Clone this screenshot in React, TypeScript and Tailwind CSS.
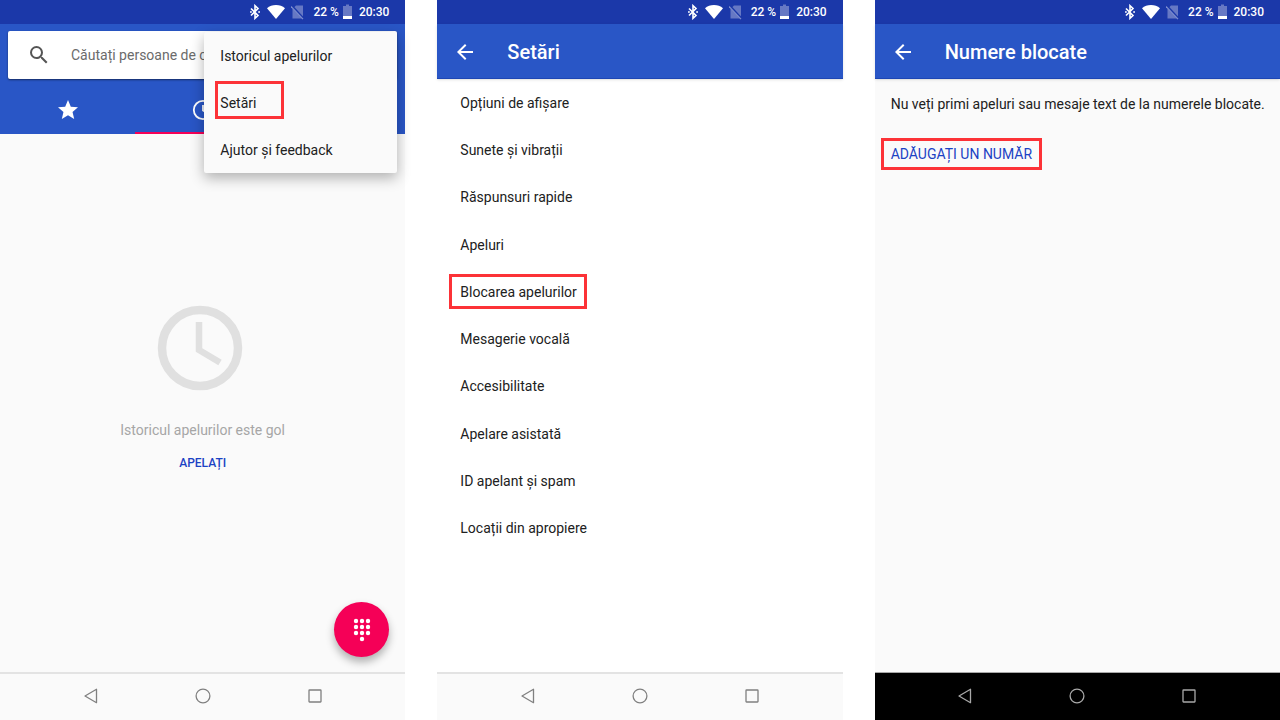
/**
 * App.tsx — Three phone screens side by side: call history with its overflow
 * menu open, the settings list, and the blocked numbers page.
 *
 * The red frames mark what to tap on each screen, in order.
 */

import React from "react";

const SETTINGS = [
  "Opțiuni de afișare",
  "Sunete și vibrații",
  "Răspunsuri rapide",
  "Apeluri",
  "Blocarea apelurilor",
  "Mesagerie vocală",
  "Accesibilitate",
  "Apelare asistată",
  "ID apelant și spam",
  "Locații din apropiere",
];

const MENU_ITEMS = ["Istoricul apelurilor", "Setări", "Ajutor și feedback"];

// Dots of the dialpad icon, three full rows and one below
const DIALPAD_DOTS = [
  [3, 3], [9, 3], [15, 3],
  [3, 9], [9, 9], [15, 9],
  [3, 15], [9, 15], [15, 15],
  [9, 21],
];

const StatusBar: React.FC = () => (
  <div className="flex h-6 items-center justify-end bg-[#1b38a9] pr-4 text-xs font-medium text-white">
    <svg className="mr-[7px] h-4 w-[10px]" viewBox="0 0 10 16" fill="none" stroke="currentColor" strokeWidth="1.6" aria-hidden="true">
      <path d="M1 4.500l7 7L5 14.300V1.700l3 2.800-7 7" />
      <path d="M0 8h1.800M8.200 8H10" />
    </svg>
    <svg className="mr-[6px] h-4 w-[18px]" viewBox="0 0 18 16" fill="currentColor" aria-hidden="true">
      <path d="M9 15L0 4.200C2.400 2.100 5.500 1 9 1s6.600 1.100 9 3.200z" />
    </svg>
    <svg className="mr-[9px] h-4 w-[13px]" viewBox="0 0 13 16" aria-hidden="true">
      <path d="M5 1.500h7v13H1.500V5z" fill="#6678c4" />
      <path d="M1 2l12 13" stroke="#1b38a9" strokeWidth="2" />
      <path d="M0 2.500l12 12.700" stroke="#7d8dcf" strokeWidth="1.200" />
    </svg>
    <span>22 %</span>
    <svg className="mr-[7px] ml-[4px] h-4 w-[9px]" viewBox="0 0 9 16" aria-hidden="true">
      <path d="M0 2h3V.5h3V2h3v10H0z" fill="#6678c4" />
      <path d="M0 12h9v3H0z" fill="white" />
    </svg>
    <span>20:30</span>
  </div>
);

const NavBar: React.FC<{ dark?: boolean }> = ({ dark }) => (
  <nav
    className={
      dark
        ? "flex h-12 items-center justify-center gap-24 border-t border-[#a8a8a8] bg-black pb-px text-[#a8a8a8]"
        : "flex h-12 items-center justify-center gap-24 border-t-2 border-[#e3e3e3] bg-[#fafafa] pb-[2px] text-[#808080]"
    }
  >
    <button type="button" aria-label="Înapoi">
      <svg className="h-4 w-4" viewBox="0 0 16 16" fill="none" stroke="currentColor" strokeWidth="1.300" strokeLinejoin="round">
        <path d="M13.500 1.300v13.400L2 8z" />
      </svg>
    </button>
    <button type="button" aria-label="Ecran principal">
      <svg className="h-4 w-4" viewBox="0 0 16 16" fill="none" stroke="currentColor" strokeWidth="1.300">
        <circle cx="8" cy="8" r="6.900" />
      </svg>
    </button>
    <button type="button" aria-label="Recente">
      <svg className="h-4 w-4" viewBox="0 0 16 16" fill="none" stroke="currentColor" strokeWidth="1.300">
        <rect x="2" y="2" width="12" height="12" rx="0.500" />
      </svg>
    </button>
  </nav>
);

const AppBar: React.FC<{ title: string }> = ({ title }) => (
  <header className="flex h-[55px] items-center gap-[30px] border-b border-[#1d46b4] bg-[#2956c6] px-4 pt-px text-white shadow">
    <button type="button" aria-label="Înapoi">
      <svg className="h-6 w-6" viewBox="0 0 24 24" fill="currentColor">
        <path d="M20 11H7.830l5.590-5.590L12 4l-8 8 8 8 1.410-1.410L7.830 13H20v-2z" />
      </svg>
    </button>
    <h1 className="text-xl font-medium">{title}</h1>
  </header>
);

const OverflowMenu: React.FC = () => (
  <ul className="absolute top-2 right-2 w-[193px] rounded-xs bg-[#fafafa] shadow-[0_5px_14px_rgba(0,0,0,0.3)]">
    {MENU_ITEMS.map((item) => (
      <li key={item} className="relative">
        <button type="button" className="h-[47px] w-full px-4 text-left">
          {item}
        </button>
        {item === "Setări" && (
          <span className="absolute top-[2px] left-[11px] h-[38px] w-[69px] border-3 border-[#fc3237]" aria-hidden="true" />
        )}
      </li>
    ))}
  </ul>
);

const HistoryScreen: React.FC = () => (
  <section className="flex flex-col bg-[#fafafa]">
    <StatusBar />
    <div className="relative flex flex-1 flex-col">
      <header className="bg-[#2956c6] pt-[7px]">
        <label className="mx-2 flex h-12 items-center gap-[20px] rounded-xs bg-white pl-[19px] shadow-[0_1px_2px_rgba(0,0,0,0.5)]">
          <svg className="h-6 w-6 text-[#555]" viewBox="0 0 24 24" fill="currentColor" aria-hidden="true">
            <path d="M15.500 14h-.790l-.280-.270A6.471 6.471 0 0 0 16 9.500 6.500 6.500 0 1 0 9.500 16c1.610 0 3.090-.590 4.230-1.570l.270.280v.790l5 4.990L20.490 19l-4.990-5zm-6 0C7.010 14 5 11.990 5 9.500S7.010 5 9.500 5 14 7.010 14 9.500 11.990 14 9.500 14z" />
          </svg>
          <input
            type="search"
            aria-label="Căutați persoane"
            placeholder="Căutați persoane de contact"
            className="min-w-0 flex-1 placeholder:text-[#6b6b6b]"
          />
        </label>
        <div className="grid h-[55px] grid-cols-3 text-white">
          <button type="button" aria-label="Favorite" className="flex items-center justify-center pt-[7px]">
            <svg className="h-6 w-6" viewBox="0 0 24 24" fill="currentColor">
              <path d="M12 17.270L18.180 21l-1.640-7.030L22 9.240l-7.190-.610L12 2 9.190 8.630 2 9.240l5.460 4.730L5.820 21z" />
            </svg>
          </button>
          <button type="button" aria-label="Recente" className="flex items-center justify-center border-b-2 border-[#f50057] pt-[9px]">
            <svg className="h-6 w-6" viewBox="0 0 24 24" fill="none" stroke="currentColor" strokeWidth="1.800">
              <circle cx="12" cy="12" r="9.200" />
              <path d="M12 7v5.500l4.500 2.500" />
            </svg>
          </button>
          <button type="button" aria-label="Persoane de contact" />
        </div>
      </header>

      <main className="flex flex-1 flex-col items-center pt-[171px]">
        <svg className="h-[86px] w-[91px]" viewBox="0 0 91 86" fill="none" stroke="#e0e0e0" aria-hidden="true">
          <circle cx="43" cy="43" r="38" strokeWidth="8.500" />
          <path d="M42 17v28l21 12.500" strokeWidth="6.500" />
        </svg>
        <p className="mt-[29px] text-[#a6a6a6]">Istoricul apelurilor este gol</p>
        <button type="button" className="mt-[15px] text-xs font-medium text-[#1c42c4]">
          APELAȚI
        </button>
      </main>

      <button
        type="button"
        aria-label="Tastatură"
        className="absolute right-4 bottom-[15px] flex h-[55px] w-[55px] items-center justify-center rounded-full bg-[#f50057] text-white shadow-[0_5px_8px_rgba(0,0,0,0.3)]"
      >
        <svg className="h-6 w-[18px]" viewBox="0 0 18 24" fill="currentColor">
          {DIALPAD_DOTS.map(([x, y]) => (
            <circle key={`${x}-${y}`} cx={x} cy={y} r="2.200" />
          ))}
        </svg>
      </button>

      <OverflowMenu />
    </div>
    <NavBar />
  </section>
);

const SettingsScreen: React.FC = () => (
  <section className="flex flex-col bg-white">
    <StatusBar />
    <AppBar title="Setări" />
    <main className="flex-1">
      <ul className="grid h-[473px] auto-rows-fr">
        {SETTINGS.map((item) => (
          <li key={item} className="relative flex">
            <button type="button" className="flex-1 px-[23px] text-left">
              {item}
            </button>
            {item === "Blocarea apelurilor" && (
              <span className="absolute top-[6px] left-3 h-[35px] w-[138px] border-3 border-[#fc3237]" aria-hidden="true" />
            )}
          </li>
        ))}
      </ul>
    </main>
    <NavBar />
  </section>
);

const BlockedScreen: React.FC = () => (
  <section className="flex flex-col bg-[#fafafa]">
    <StatusBar />
    <AppBar title="Numere blocate" />
    <main className="flex-1 pt-[15px]">
      <p className="pl-4">Nu veți primi apeluri sau mesaje text de la numerele blocate.</p>
      <button
        type="button"
        className="mt-6 ml-[6px] h-8 w-[161px] border-3 border-[#fc3237] pl-[7px] text-left text-[#1c42c4]"
      >
        ADĂUGAȚI UN NUMĂR
      </button>
    </main>
    <NavBar dark />
  </section>
);

const App: React.FC = () => (
  <div className="grid min-h-screen grid-cols-3 gap-8 bg-white font-['Roboto',sans-serif] text-sm text-[#212121]">
    <HistoryScreen />
    <SettingsScreen />
    <BlockedScreen />
  </div>
);

export default App;
